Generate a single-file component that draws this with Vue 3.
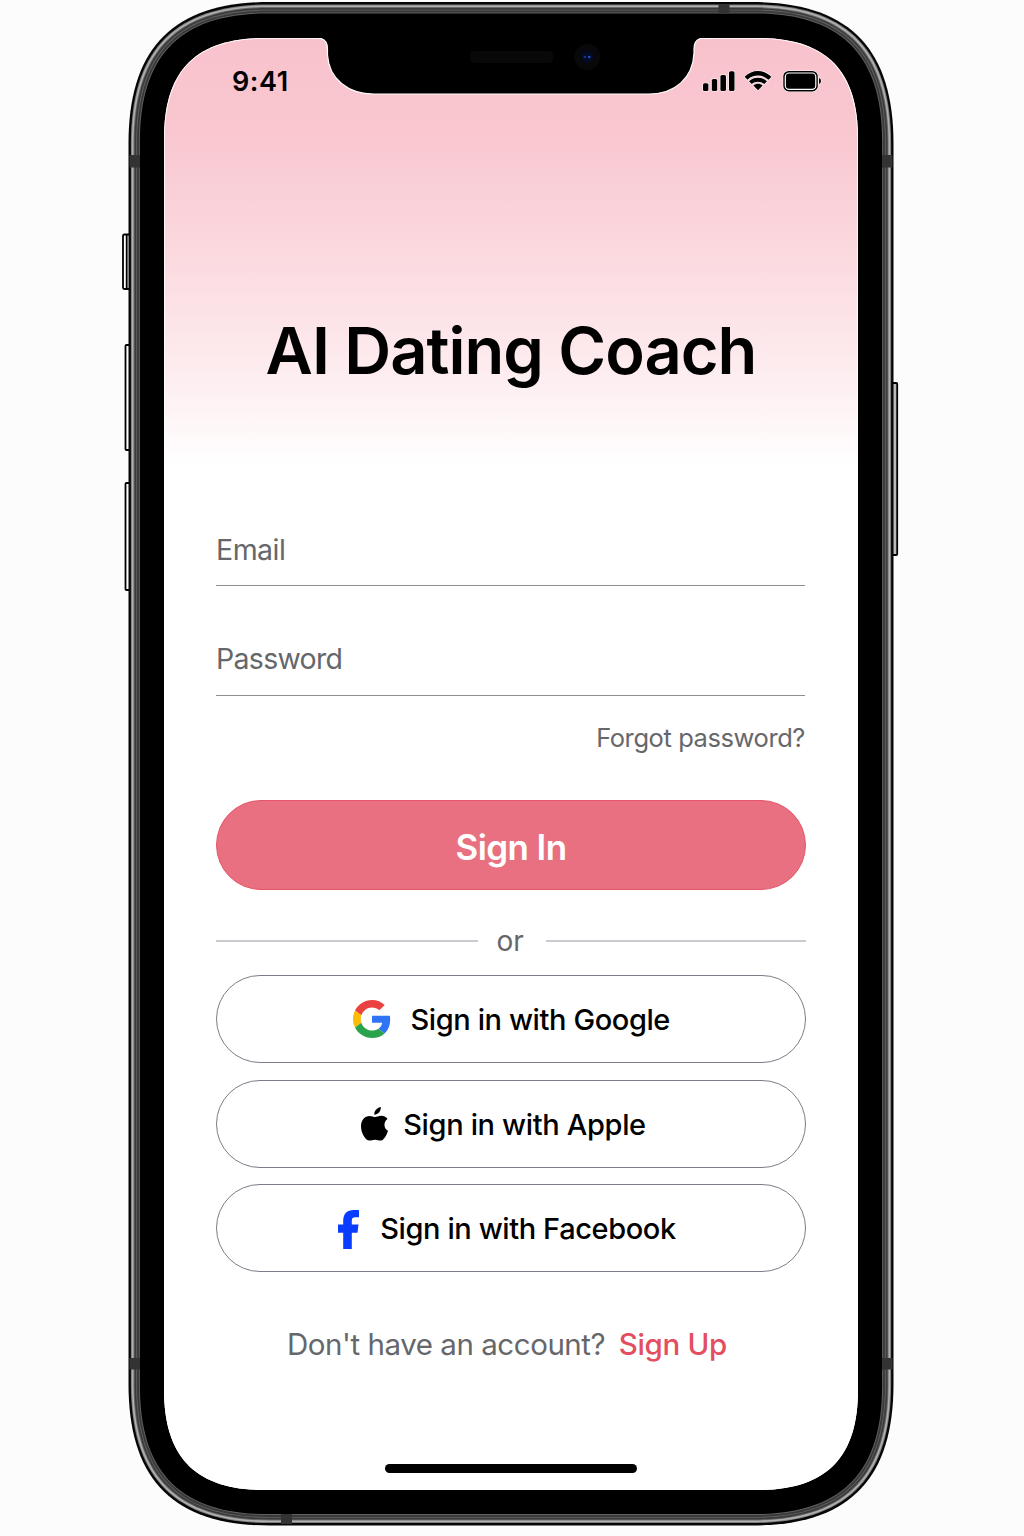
<script setup>
// Rounded rectangle with continuous-curvature corners.
function squircle(x, y, w, h, r) {
  const l = r * 1.18
  const c = l * 0.32
  const R = x + w
  const B = y + h
  return [
    `M${x} ${y + l}`,
    `C${x} ${y + c} ${x + c} ${y} ${x + l} ${y}`,
    `H${R - l}`,
    `C${R - c} ${y} ${R} ${y + c} ${R} ${y + l}`,
    `V${B - l}`,
    `C${R} ${B - c} ${R - c} ${B} ${R - l} ${B}`,
    `H${x + l}`,
    `C${x + c} ${B} ${x} ${B - c} ${x} ${B - l}`,
    'Z',
  ].join('')
}

// Metal rim, from the outside in: [inset, colour]
const rim = [
  [0, '#060606'],
  [2.4, '#7d7d7d'],
  [3.4, '#b0b0b0'],
  [5, '#6a6a6a'],
  [6, '#3b3b3b'],
  [7.7, '#626262'],
  [8.6, '#393939'],
  [10.4, '#606060'],
  [11.4, '#000'],
].map(([i, fill]) => ({ fill, d: squircle(128.5 + i, 2 + i, 765 - 2 * i, 1523.5 - 2 * i, 120 - i) }))

const screenPath = squircle(164, 38, 694, 1452, 85)
</script>

<template>
  <main class="stage">
    <svg class="device" viewBox="0 0 1024 1536" aria-hidden="true">
      <defs>
        <linearGradient id="blush" gradientUnits="userSpaceOnUse" x1="0" y1="38" x2="0" y2="470">
          <stop offset="0" stop-color="#f8c2cc" />
          <stop offset=".22" stop-color="#f9c7d0" />
          <stop offset=".5" stop-color="#fbd9df" />
          <stop offset=".75" stop-color="#fdebee" />
          <stop offset="1" stop-color="#fff" />
        </linearGradient>
        <clipPath id="glass"><path :d="screenPath" /></clipPath>
      </defs>

      <g fill="#fff" stroke="#000" stroke-width="1.8">
        <rect x="123" y="234.500" width="7" height="54.500" rx="1.500" />
        <path d="M126.700 235V289" />
        <rect x="125.500" y="345" width="5" height="105" rx="1" />
        <rect x="125.500" y="483" width="5" height="107" rx="1" />
        <rect x="892" y="383" width="5.200" height="172" rx="1" fill="#bbb" />
      </g>

      <path v-for="ring in rim" :key="ring.d" :d="ring.d" :fill="ring.fill" />
      <g fill="#333">
        <rect x="129.500" y="155" width="10.500" height="12.500" />
        <rect x="882" y="155" width="10.500" height="12.500" />
        <rect x="129.500" y="1358" width="10.500" height="11.500" />
        <rect x="882" y="1358" width="10.500" height="11.500" />
        <rect x="718.500" y="4" width="11" height="10" />
        <rect x="281" y="1514" width="11" height="10" />
      </g>

      <path :d="screenPath" fill="url(#blush)" />
      <g clip-path="url(#glass)">
        <path :d="screenPath" fill="none" stroke="#fff" stroke-width="1.600" />
        <path
          d="M310 30V38H317Q327.500 38 327.500 49V55C329 79 348 94 374 94H649C675 94 693 78 694 53V49Q694 38 704.500 38H712V30Z"
          fill="#000" stroke="#fff" stroke-width="1.200"
        />
        <path d="M328 30H694V42H328Z" fill="#000" />
      </g>
      <rect x="470" y="51" width="83" height="12" rx="4" fill="#080808" />
      <circle cx="587.300" cy="57" r="13" fill="#08080a" />
      <circle cx="587.300" cy="57" r="6" fill="#030a24" />
      <circle cx="584.800" cy="57" r="1.300" fill="#16338c" />
      <circle cx="589.200" cy="57" r="1.300" fill="#2350c4" />
    </svg>

    <section class="screen">
      <header class="status">
        <span class="clock">9:41</span>
        <svg class="indicators" viewBox="0 0 120 24" aria-hidden="true">
          <g stroke="#fff" stroke-width="1.100" paint-order="stroke">
            <rect x="1" y="14.200" width="5.400" height="7.800" rx="1.600" />
            <rect x="9.800" y="10" width="5.400" height="12" rx="1.600" />
            <rect x="18.400" y="6" width="5.600" height="16" rx="1.600" />
            <rect x="27" y="2.200" width="5.500" height="19.800" rx="1.600" />
            <path d="M42.600 7.800C50.300 0 61.700 0 69.400 7.800L66.600 10.800C60.500 5.200 51.500 5.200 45.400 10.800Z" />
            <path d="M47 12.200C52 7.600 60 7.600 65 12.200L62.300 15C58.700 11.900 53.300 11.900 49.700 15Z" />
            <path d="M51.300 16.500C54 14.100 58 14.100 60.700 16.500L56 21.300Z" />
            <rect x="81.300" y="2" width="34.500" height="20.400" rx="5.500" />
            <path d="M117 9Q119 9.500 119 12T117 15Z" />
          </g>
          <rect x="83.300" y="4" width="30.500" height="16.400" rx="3.800" fill="#000" stroke="#fff" stroke-width="1.200" />
        </svg>
      </header>

      <h1>AI Dating Coach</h1>

      <form class="form" @submit.prevent>
        <label class="field email">Email</label>
        <label class="field password">Password</label>
        <a class="forgot">Forgot password?</a>
        <button class="primary">Sign In</button>

        <div class="divider"><i></i><span>or</span><i></i></div>

        <div class="providers">
          <button class="provider google">
            <svg viewBox="0 0 48 48" aria-hidden="true">
              <path fill="#ea4240" d="M24 9.500c3.540 0 6.710 1.220 9.210 3.600l6.850-6.850C35.900 2.380 30.470 0 24 0 14.620 0 6.510 5.380 2.560 13.220l7.980 6.190C12.430 13.720 17.740 9.500 24 9.500z" />
              <path fill="#2f74f5" d="M46.980 24.550c0-1.570-.15-3.090-.38-4.550H24v8.600h12.940c-.58 2.960-2.260 5.900-4.780 7.600l7.730 6c4.510-4.180 7.090-10.360 7.090-17.650z" />
              <path fill="#fbbc05" d="M10.530 28.590c-.48-1.450-.76-2.990-.76-4.590s.27-3.140.76-4.590l-7.980-6.190C.92 16.460 0 20.120 0 24c0 3.880.92 7.540 2.560 10.780l7.970-6.190z" />
              <path fill="#2ba24c" d="M24 48c6.480 0 11.930-2.130 15.890-5.810l-7.730-6c-2.150 1.450-4.920 2.300-8.160 2.300-6.260 0-11.570-4.220-13.470-9.910l-7.980 6.190C6.510 42.620 14.620 48 24 48z" />
            </svg>
            <span>Sign in with Google</span>
          </button>
          <button class="provider apple">
            <svg viewBox="0 0 27 34" aria-hidden="true">
              <path d="M19.800 0c.3 4.200-2.700 7.700-6.500 7.700C13 4 16.100.5 19.800 0zM26.500 11.900c-4.400 3-3.800 9.600.5 11.800-1.200 4.100-4.200 9.900-7.400 9.900-2 0-3.100-.8-5.600-.8s-3.700.8-5.600.8C4.700 33.600 0 26.300 0 19.200c0-6.400 4-10.300 8.500-10.300 2.300 0 4.200 1.200 5.600 1.200 1.300 0 3.400-1.300 6.200-1.300 2.400 0 4.800 1.200 6.200 3.100z" />
            </svg>
            <span>Sign in with Apple</span>
          </button>
          <button class="provider facebook">
            <svg viewBox="0 0 21 39" aria-hidden="true">
              <path fill="#0a3cff" d="M5.200 39V22.700H0V14.500H5.200V11C5.200 3.600 9.200 0 15.500 0H21V7.300H17.200C14.800 7.300 13.800 8.500 13.800 10.500V14.500H20.500L19.500 22.700H13.800V39Z" />
            </svg>
            <span>Sign in with Facebook</span>
          </button>
        </div>
      </form>

      <p class="signup"><span>Don't have an account?</span><a>Sign Up</a></p>
      <div class="home"></div>
    </section>
  </main>
</template>

<style>
body { background: #fcfcfc; }
</style>

<style scoped>
.stage {
  display: grid;
  width: 1024px;
  height: 1536px;
  overflow: hidden;
  background: #fcfcfc;
  font-family: Inter, "Liberation Sans", sans-serif;
  color: #000;
}
.device, .screen { grid-area: 1 / 1; }
.device { width: 1024px; height: 1536px; }
.screen {
  display: flex;
  flex-direction: column;
  box-sizing: border-box;
  width: 694px;
  height: 1452px;
  margin: 38px 0 0 164px;
  padding: 0 52px;
  z-index: 1;
}
.status {
  display: flex;
  align-items: center;
  justify-content: space-between;
  height: 86px;
  margin: 0 -16px 0 16px;
}
.clock { font-size: 27px; font-weight: 600; letter-spacing: 0.6px; }
.indicators { width: 120px; height: 24px; }
h1 {
  display: flex;
  justify-content: center;
  margin: 187px 0 0;
  font-size: 65px;
  font-weight: 600;
  line-height: 80px;
  letter-spacing: -1px;
  white-space: nowrap;
}
.form { display: flex; flex-direction: column; margin-top: 139px; }
.field {
  height: 55px;
  margin-right: 1px;
  border-bottom: 1px solid #8e8e93;
  color: #66676b;
  font-size: 28.5px;
  line-height: 39px;
  letter-spacing: -0.7px;
}
.email { letter-spacing: -0.5px; }
.password { height: 56px; margin-top: 53px; }
.forgot {
  align-self: flex-end;
  margin: 22px 1px 0 0;
  color: #66676b;
  font-size: 25.5px;
  line-height: 40px;
  letter-spacing: -0.42px;
}
.primary {
  box-sizing: border-box;
  height: 90px;
  margin-top: 42px;
  padding: 4px 0 0;
  border: 1px solid #e5566a;
  border-radius: 45px;
  background: #e87080;
  color: #fff;
  font: 600 35px Inter, sans-serif;
  letter-spacing: -0.6px;
}
.divider {
  display: flex;
  align-items: center;
  height: 40px;
  margin-top: 31px;
  color: #66676b;
  font-size: 28px;
}
.divider i { width: 262px; height: 1.5px; background: #c9cbd0; }
.divider i:last-child { width: 260px; margin-left: auto; }
.divider span { margin-left: 18.5px; }
.providers { display: flex; flex-direction: column; gap: 16.5px; margin-top: 14px; }
.provider {
  display: flex;
  align-items: center;
  justify-content: center;
  box-sizing: border-box;
  height: 88px;
  padding: 0;
  border: 1px solid #7c7d86;
  border-radius: 44px;
  background: #fff;
  color: #000;
  font: 500 29px Inter, sans-serif;
  letter-spacing: -0.4px;
}
.google { padding-left: 1px; }
.google svg { width: 38px; height: 38px; margin-right: 19.5px; }
.apple { padding: 2px 15px 0 0; letter-spacing: -0.35px; }
.apple svg { width: 27px; height: 34px; margin: -2px 15px 0 0; }
.facebook { padding: 0 8px 0 0; }
.facebook svg { width: 21px; height: 39px; margin: 3px 21px 0 0; }
.signup {
  display: flex;
  justify-content: center;
  gap: 13.5px;
  margin: 51.5px 0 0;
  padding-right: 8px;
  color: #66676b;
  font-size: 29.5px;
  line-height: 40px;
  letter-spacing: -0.45px;
  white-space: nowrap;
}
.signup a { color: #e34f60; font-weight: 500; letter-spacing: -0.3px; }
.home {
  align-self: center;
  width: 252px;
  height: 9.5px;
  margin-top: 100px;
  border-radius: 5px;
  background: #000;
}
</style>
